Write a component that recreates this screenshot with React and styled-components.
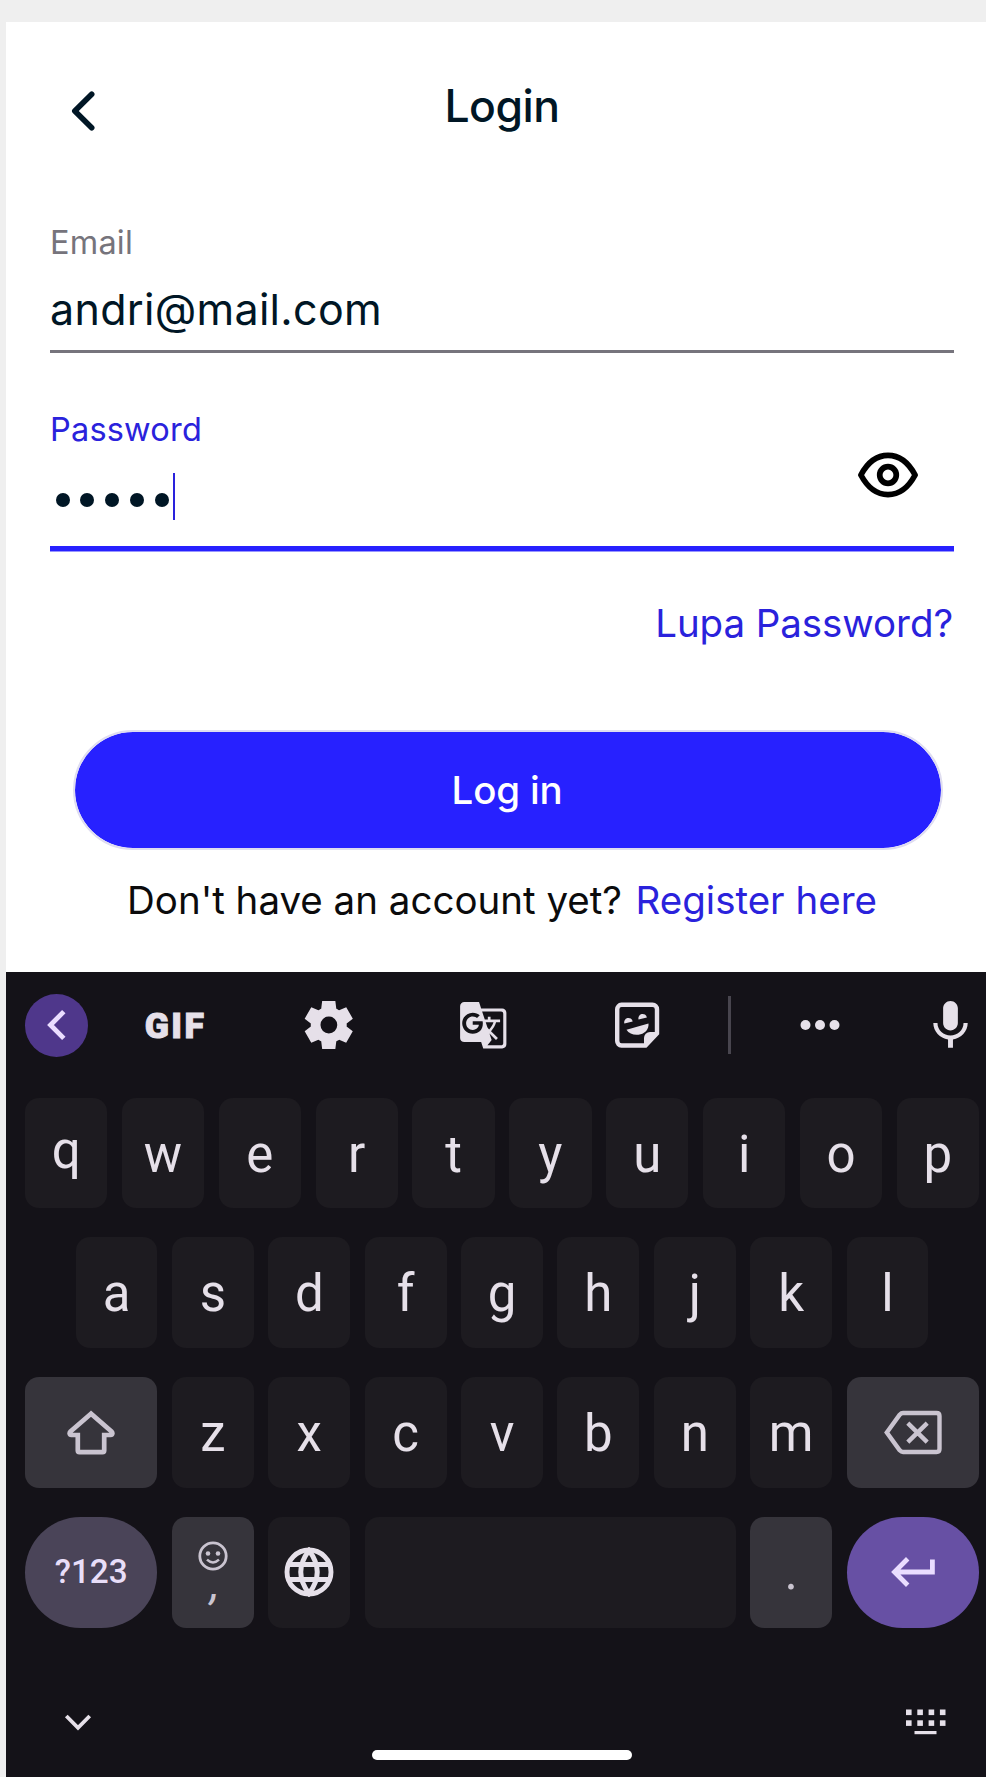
import React from 'react';
import styled, { createGlobalStyle } from 'styled-components';
import { MdGTranslate, MdMic } from 'react-icons/md';

const GlobalStyle = createGlobalStyle`
  * { box-sizing: border-box; }
  body { margin: 0; background: #efefef; overflow: hidden; }
`;

const Page = styled.div`
  height: 1777px;
  padding: 22px 0 0 6px;
  overflow: hidden;
  background: #efefef;
  font-family: Inter, sans-serif;
`;

const Phone = styled.main`
  width: 992px;
  height: 1755px;
  display: flex;
  flex-direction: column;
  background: #fff;
`;

const LoginScreen = styled.section`
  height: 950px;
  padding: 0 44px;
  display: flex;
  flex-direction: column;
`;

const Header = styled.header`
  height: 166px;
  display: grid;
  grid-template-columns: 66px 1fr 66px;
  align-items: center;
`;

const BackButton = styled.span`
  display: flex;
  margin: 11px 0 0 20px;
`;

const Title = styled.h1`
  margin: 1px 0 0;
  text-align: center;
  font-size: 44.5px;
  font-weight: 500;
  line-height: 56px;
  letter-spacing: -0.5px;
  color: #001625;
`;

const Field = styled.div`
  display: flex;
  align-items: center;
  justify-content: space-between;
  margin-top: ${(p) => (p.$active ? 52 : 30)}px;
  padding: 0 36px ${(p) => (p.$active ? 0 : 12)}px 0;
  height: ${(p) => (p.$active ? 146 : 135)}px;
  border-bottom: ${(p) => (p.$active ? '5px solid #2721ff' : '3px solid #76747c')};
  box-shadow: ${(p) => (p.$active ? '0 1px 0 #9895ff' : 'none')};
`;

const FieldBody = styled.div`
  display: flex;
  flex-direction: column;
  height: 100%;
  padding-top: 1px;
  gap: ${(p) => (p.$active ? 18 : 14)}px;
`;

const Label = styled.label`
  font-size: 32.5px;
  line-height: 48px;
  letter-spacing: 0.2px;
  color: ${(p) => (p.$active ? '#2a22dc' : '#76747c')};
`;

const Value = styled.div`
  display: flex;
  align-items: center;
  height: 56px;
  font-size: 43px;
  line-height: 56px;
  letter-spacing: 0.3px;
  color: #001625;
`;

const Dot = styled.i`
  width: 14px;
  height: 14px;
  margin: 0 5.35px;
  border-radius: 50%;
  background: #001625;

  &:first-child { margin-left: 5.8px; }
`;

const Caret = styled.i`
  width: 2.5px;
  height: 47px;
  margin: -8px 0 0 -1px;
  background: #2a22dc;
`;

const EyeButton = styled.span`
  display: flex;
  margin-bottom: 2px;
`;

const ForgotLink = styled.a`
  margin-top: 49px;
  padding-right: 1px;
  text-align: right;
  font-size: 38.5px;
  line-height: 46px;
  letter-spacing: -0.07px;
  color: #2a22dc;
`;

const LoginButton = styled.button`
  height: 120px;
  margin: 84px 11px 0 23px;
  padding: 0 2px 0 0;
  border: 2px solid #dfddf0;
  border-radius: 60px;
  background: #2721ff;
  background-clip: padding-box;
  color: #fff;
  font: 500 38.5px/46px Inter, sans-serif;
  letter-spacing: -0.2px;
`;

const Prompt = styled.p`
  margin: 27px 0 0;
  display: flex;
  justify-content: center;
  gap: 13.5px;
  white-space: nowrap;
  font-size: 38.5px;
  line-height: 46px;
  letter-spacing: 0;
  color: #0b0b0c;

  a { color: #2a22dc; }
`;

const Keyboard = styled.section`
  flex: 1;
  padding-left: 19px;
  background: #141218;
  color: #e6e0e9;
  font-family: Roboto, sans-serif;
`;

const Toolbar = styled.div`
  height: 106.6px;
  display: flex;
  align-items: center;
`;

const CollapseButton = styled.span`
  flex: none;
  width: 63px;
  height: 63px;
  margin-right: 9.3px;
  display: grid;
  place-items: center;
  border-radius: 50%;
  background: #4f378b;
`;

const Tool = styled.span`
  flex: none;
  width: ${(p) => p.$width || 154.3}px;
  display: grid;
  place-items: center;
`;

const GifLabel = styled.b`
  font: 900 35.5px/40px Roboto, sans-serif;
  letter-spacing: 2.4px;
  padding: 1px 0 0 2px;
  -webkit-text-stroke: 1px currentColor;
`;

const Divider = styled.i`
  flex: none;
  width: 2.5px;
  height: 58px;
  margin: 0 12px 0 14px;
  background: #48454e;
`;

const Rows = styled.div`
  width: 954px;
  margin-top: 19.1px;
  display: flex;
  flex-direction: column;
  gap: 29.1px;
`;

const Row = styled.div`
  display: flex;
  gap: 14.6px;
  padding: 0 ${(p) => (p.$inset ? 50.7 : 0)}px;
`;

const keyTones = {
  letter: ['#1d1b20', '#e6e0e9'],
  action: ['#36343b', '#cac4d0'],
  symbols: ['#4a4458', '#e8def8'],
  enter: ['#6750a4', '#eaddff'],
};

const Key = styled.span`
  flex: ${(p) => (p.$width ? 'none' : '1')};
  width: ${(p) => (p.$width ? `${p.$width}px` : 'auto')};
  height: 110.7px;
  padding-top: ${(p) => (p.$letter ? 3 : 0)}px;
  padding-bottom: ${(p) => (p.$raised ? 8 : 0)}px;
  display: flex;
  flex-direction: column;
  align-items: center;
  justify-content: center;
  border-radius: ${(p) => (p.$pill ? 56 : 14)}px;
  background: ${(p) => keyTones[p.$tone || 'letter'][0]};
  color: ${(p) => keyTones[p.$tone || 'letter'][1]};
  font-size: ${(p) => (p.$pill ? 33.3 : 51)}px;
  font-weight: ${(p) => (p.$pill ? 500 : 400)};
  line-height: 60px;
`;

const Comma = styled.span`
  height: 32px;
  padding-left: 4px;
  font-size: 46px;
  font-style: italic;
  line-height: 24px;
`;

const BottomBar = styled.div`
  width: 954px;
  margin-top: 81.5px;
  padding: 0 33px 0 39px;
  display: flex;
  justify-content: space-between;
  align-items: center;
`;

const HomeIndicator = styled.div`
  width: 260px;
  height: 10px;
  margin: 14.5px 0 0 347px;
  border-radius: 6px;
  background: #fff;
`;

const BackIcon = () => (
  <svg width="26" height="42" viewBox="0 0 26 42" fill="none" stroke="#001625" strokeWidth="5.6" strokeLinecap="round" strokeLinejoin="round">
    <path d="M21.7 4.2 4.8 21l16.900 16.800" />
  </svg>
);

const EyeIcon = () => (
  <svg width="60" height="46" viewBox="0 0 60 46" fill="none" stroke="#000" strokeWidth="5.7" strokeLinejoin="round">
    <path d="M2.900 23C9.500 10.600 18.800 3.400 30 3.400S50.500 10.600 57.100 23C50.500 35.400 41.200 42.600 30 42.600S9.500 35.400 2.900 23Z" />
    <circle cx="30" cy="23" r="8.3" />
  </svg>
);

const CollapseIcon = () => (
  <svg width="20" height="32" viewBox="0 0 20 32" fill="none" stroke="#eaddff" strokeWidth="4.8">
    <path d="M16.800 2.600 3.500 16l13.300 13.400" />
  </svg>
);

const GearIcon = () => (
  <svg width="57.500" height="58" viewBox="0 0 24 24" fill="currentColor">
    <path d="m9.25 22-.4-3.2q-.325-.125-.612-.3t-.563-.375L4.7 19.375l-2.750-4.750 2.575-1.950Q4.500 12.500 4.500 12.338v-.675q0-.163.025-.338L1.950 9.375l2.750-4.750 2.975 1.250q.275-.2.575-.375t.6-.3l.4-3.200h5.500l.4 3.200q.325.125.613.3t.562.375l2.975-1.250 2.750 4.750-2.575 1.950q.025.175.025.338v.674q0 .163-.05.338l2.575 1.950-2.750 4.750-2.950-1.250q-.275.2-.575.375t-.6.3l-.4 3.200zm2.800-6.500q1.450 0 2.475-1.025T15.550 12t-1.025-2.475T12.050 8.500q-1.475 0-2.488 1.025T8.550 12t1.013 2.475T12.050 15.500" />
  </svg>
);

const StickerIcon = () => (
  <svg width="45" height="46" viewBox="0 0 45 46" fill="currentColor">
    <path d="M6.500 2.800h31a4.500 4.500 0 0 1 4.500 4.500v24L30.500 43.500h-24A4.500 4.500 0 0 1 2.200 39V7.300a4.500 4.500 0 0 1 4.300-4.500Z" fill="none" stroke="currentColor" strokeWidth="4.400" />
    <path d="M29 43V36a6 6 0 0 1 6-6H43L31 43Z" />
    <path d="M9.400 21.600a4.300 4.300 0 1 1 8.300-2.200ZM23.600 17.600a4.300 4.300 0 1 1 8.300-2.200Z" />
    <path d="M11.500 27.700 33.500 21.400c.4 5.500-3 9.500-7.900 10.800-5.300 1.400-11.400.1-14.100-4.500Z" />
  </svg>
);

const MoreIcon = () => (
  <svg width="40" height="12" viewBox="0 0 40 12" fill="currentColor">
    <circle cx="5.500" cy="6" r="5" />
    <circle cx="20" cy="6" r="5" />
    <circle cx="34.500" cy="6" r="5" />
  </svg>
);

const ShiftIcon = () => (
  <svg width="48" height="46" viewBox="0 0 48 46" fill="none" stroke="currentColor" strokeWidth="4.700">
    <path d="M24 3.700 3.500 21.500c-1.500 1.500-1 3.500.8 3.500h6.500v15.500q0 1.700 1.700 1.700h23q1.700 0 1.700-1.700V25h6.500c1.800 0 2.300-2 .8-3.500Z" />
  </svg>
);

const BackspaceIcon = () => (
  <svg width="58" height="45" viewBox="0 0 58 45" fill="none" stroke="currentColor" strokeWidth="4.400">
    <path d="M2.800 22.500 15.700 4.700Q17.300 3 19 3h33.500Q55.500 3 55.500 6v33q0 3-3 3H19q-1.700 0-3.300-1.700Z" />
    <path d="m23.800 13.200 19.400 18.900M43.200 13.200 23.800 32.100" />
  </svg>
);

const SmileIcon = () => (
  <svg width="30" height="30" viewBox="0 0 30 30" fill="none" stroke="currentColor" strokeWidth="2.800">
    <circle cx="15" cy="15" r="13.200" />
    <circle cx="10" cy="12.500" r="2.300" fill="currentColor" stroke="none" />
    <circle cx="20" cy="12.500" r="2.300" fill="currentColor" stroke="none" />
    <path d="M9 18.700Q15 24.300 21 18.700" strokeWidth="2.500" />
  </svg>
);

const GlobeIcon = () => (
  <svg width="50" height="50" viewBox="0 0 50 50" fill="none" stroke="currentColor" strokeWidth="4.900">
    <circle cx="25" cy="25" r="22" />
    <path d="M25 3.500Q8.500 25 25 46.500Q41.500 25 25 3.500ZM4.500 17.500h41M4.500 32.500h41" />
  </svg>
);

const EnterIcon = () => (
  <svg width="44" height="30" viewBox="0 0 44 30" fill="none" stroke="currentColor" strokeWidth="4.800">
    <path d="M41.400 2.500V15H3.500M16.700 1.700 3.500 15l13.200 13.300" />
  </svg>
);

const HideIcon = () => (
  <svg width="28" height="18" viewBox="0 0 28 18" fill="none" stroke="currentColor" strokeWidth="3.800">
    <path d="M2.300 3 14 14.800 25.700 3" />
  </svg>
);

const KeyboardIcon = () => (
  <svg width="40" height="26" viewBox="0 0 40 26" fill="currentColor">
    {[0, 11.300, 22.600, 33.900].map((x) => (
      <React.Fragment key={x}>
        <rect x={x} y="0.500" width="5.600" height="5.600" />
        <rect x={x} y="11.300" width="5.600" height="5.600" />
      </React.Fragment>
    ))}
    <rect x="8.500" y="22" width="22" height="3.200" />
  </svg>
);

export default function App() {
  return (
    <Page>
      <GlobalStyle />
      <Phone>
        <LoginScreen>
          <Header>
            <BackButton><BackIcon /></BackButton>
            <Title>Login</Title>
          </Header>
          <Field>
            <FieldBody>
              <Label>Email</Label>
              <Value>andri@mail.com</Value>
            </FieldBody>
          </Field>
          <Field $active>
            <FieldBody $active>
              <Label $active>Password</Label>
              <Value>
                {[0, 1, 2, 3, 4].map((n) => <Dot key={n} />)}
                <Caret />
              </Value>
            </FieldBody>
            <EyeButton><EyeIcon /></EyeButton>
          </Field>
          <ForgotLink>Lupa Password?</ForgotLink>
          <LoginButton>Log in</LoginButton>
          <Prompt>
            <span>Don't have an account yet?</span>
            <a>Register here</a>
          </Prompt>
        </LoginScreen>
        <Keyboard>
          <Toolbar>
            <CollapseButton><CollapseIcon /></CollapseButton>
            <Tool><GifLabel>GIF</GifLabel></Tool>
            <Tool><GearIcon /></Tool>
            <Tool><MdGTranslate size={50.5} /></Tool>
            <Tool><StickerIcon /></Tool>
            <Divider />
            <Tool><MoreIcon /></Tool>
            <Tool $width={106}><MdMic size={59} /></Tool>
          </Toolbar>
          <Rows>
            <Row>
              {[...'qwertyuiop'].map((c) => <Key key={c} $letter $raised={c === 'q'}>{c}</Key>)}
            </Row>
            <Row $inset>
              {[...'asdfghjkl'].map((c) => <Key key={c} $letter>{c}</Key>)}
            </Row>
            <Row>
              <Key $tone="action" $width={132.4}><ShiftIcon /></Key>
              {[...'zxcvbnm'].map((c) => <Key key={c} $letter>{c}</Key>)}
              <Key $tone="action" $width={132.4}><BackspaceIcon /></Key>
            </Row>
            <Row>
              <Key $tone="symbols" $pill $width={132.4}>?123</Key>
              <Key $tone="action" $width={81.7}>
                <SmileIcon />
                <Comma>,</Comma>
              </Key>
              <Key $width={81.7}><GlobeIcon /></Key>
              <Key />
              <Key $tone="action" $width={81.7}>.</Key>
              <Key $tone="enter" $pill $width={132.4}><EnterIcon /></Key>
            </Row>
          </Rows>
          <BottomBar>
            <HideIcon />
            <KeyboardIcon />
          </BottomBar>
          <HomeIndicator />
        </Keyboard>
      </Phone>
    </Page>
  );
}
